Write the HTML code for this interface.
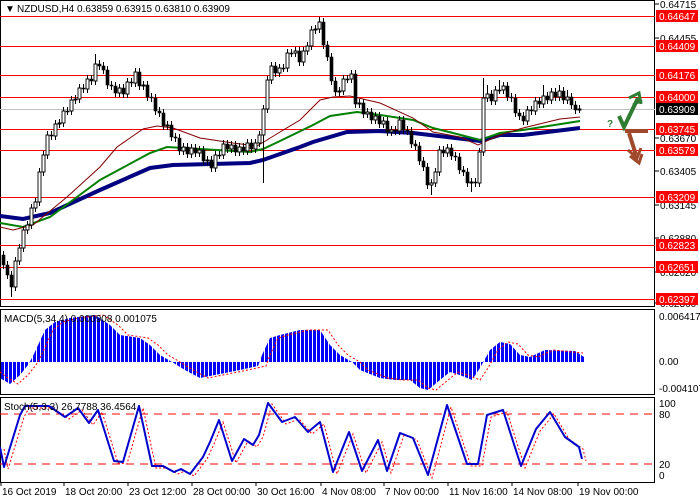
<!DOCTYPE html>
<html><head><meta charset="utf-8"><style>
body{margin:0;width:700px;height:500px;overflow:hidden;background:#fff}
svg{display:block}
text{font-family:"Liberation Sans",sans-serif;font-size:10px}
</style></head><body>
<svg width="700" height="500" xmlns="http://www.w3.org/2000/svg">
<defs>
<pattern id="bars" x="1" y="0" width="4" height="10" patternUnits="userSpaceOnUse"><rect x="0" y="0" width="3" height="10" fill="#0000ff"/></pattern>
</defs>
<rect x="0" y="0" width="700" height="500" fill="#fff"/>
<rect x="0.5" y="0.5" width="654" height="306" fill="none" stroke="#000"/>
<rect x="0.5" y="309.5" width="654" height="85" fill="none" stroke="#000"/>
<rect x="0.5" y="397.5" width="654" height="85" fill="none" stroke="#000"/>
<g stroke="#f00">
<line x1="0" x2="655" y1="16.5" y2="16.5"/><line x1="0" x2="655" y1="46.5" y2="46.5"/><line x1="0" x2="655" y1="75.5" y2="75.5"/><line x1="0" x2="655" y1="97.5" y2="97.5"/><line x1="0" x2="655" y1="129.5" y2="129.5"/><line x1="0" x2="655" y1="150.5" y2="150.5"/><line x1="0" x2="655" y1="197.5" y2="197.5"/><line x1="0" x2="655" y1="245.5" y2="245.5"/><line x1="0" x2="655" y1="267.5" y2="267.5"/><line x1="0" x2="655" y1="299.5" y2="299.5"/>
</g>
<line x1="0" x2="655" y1="109.5" y2="109.5" stroke="#c0c0c0"/>
<!-- MAs -->
<polyline fill="none" stroke="#000080" stroke-width="4" points="0,216 23,219 50,213 100,190 150,168 173,165 250,163 263,160 300,147 313,142 347,132 380,131 413,133 447,137 480,141 500,135 523,135 580,128"/>
<polyline fill="none" stroke="#008000" stroke-width="2" points="0,223 23,227 50,217 100,180 150,153 167,147 200,149 250,152 263,149 280,141 313,125 330,116 357,112 380,115 413,120 433,128 453,133 480,140 500,133 523,130 580,121"/>
<polyline fill="none" stroke="#800000" stroke-width="1" points="0,227 13,230 33,225 67,197 100,167 117,147 143,129 157,126 173,128 200,138 233,143 257,146 267,140 280,132 300,120 320,100 333,97 350,96 380,103 413,118 433,132 460,137 478,145 500,135 523,128 560,119 580,117"/>
<!-- wicks -->
<path stroke="#000" fill="none" d="M3.5 251V269M7.5 261V279M11.5 271V297M15.5 257V291M19.5 244V265M23.5 226V252M27.5 221V234M31.5 204V229M35.5 198V212M39.5 168V206M43.5 151V176M47.5 131V159M51.5 131V140M55.5 120V140M59.5 119V128M63.5 107V127M67.5 107V115M71.5 96V115M75.5 95V104M79.5 84V103M83.5 84V93M87.5 75V93M91.5 75V85M95.5 54V85M99.5 60V70M103.5 62V74M107.5 66V89M111.5 81V90M115.5 82V97M119.5 84V97M123.5 84V98M127.5 78V98M131.5 78V87M135.5 68V87M139.5 68V90M143.5 81V90M147.5 81V101M151.5 93V102M155.5 94V115M159.5 107V117M163.5 109V130M167.5 121V130M171.5 121V141M175.5 133V142M179.5 134V155M183.5 143V155M187.5 143V158M191.5 144V158M195.5 144V157M199.5 146V157M203.5 146V165M207.5 156V165M211.5 156V172M215.5 151V172M219.5 151V159M223.5 140V159M227.5 140V153M231.5 141V153M235.5 141V156M239.5 143V156M243.5 143V155M247.5 139V155M251.5 139V153M255.5 139V153M259.5 131V147M263.5 105V183M267.5 76V113M271.5 62V84M275.5 62V77M279.5 64V77M283.5 64V72M287.5 49V72M291.5 49V57M295.5 47V57M299.5 47V66M303.5 47V66M307.5 42V55M311.5 26V50M315.5 25V34M319.5 17V33M323.5 18V49M327.5 41V61M331.5 53V85M335.5 77V96M339.5 87V96M343.5 75V95M347.5 75V83M351.5 70V83M355.5 70V108M359.5 99V108M363.5 99V118M367.5 108V118M371.5 108V124M375.5 112V124M379.5 112V128M383.5 117V128M387.5 117V136M391.5 126V136M395.5 126V135M399.5 116V135M403.5 116V134M407.5 126V135M411.5 127V148M415.5 140V150M419.5 142V165M423.5 157V171M427.5 163V189M431.5 179V195M435.5 168V187M439.5 146V176M443.5 146V157M447.5 144V157M451.5 144V160M455.5 152V161M459.5 153V174M463.5 166V176M467.5 168V187M471.5 178V192M475.5 178V187M479.5 148V187M483.5 78V156M487.5 85V102M491.5 90V105M495.5 86V105M499.5 80V94M503.5 82V94M507.5 82V101M511.5 93V102M515.5 94V117M519.5 109V120M523.5 112V125M527.5 106V125M531.5 106V115M535.5 97V115M539.5 97V108M543.5 85V108M547.5 92V104M551.5 88V104M555.5 88V101M559.5 85V101M563.5 87V104M567.5 90V104M571.5 93V109M575.5 101V114M579.5 105V113"/>
<!-- black bodies -->
<path fill="#000" stroke="#000" stroke-width="0.6" d="M2 255h3v10h-3zM6 265h3v10h-3zM10 275h3v12h-3zM50 135h3v1h-3zM66 111h3v1h-3zM82 88h3v1h-3zM90 79h3v2h-3zM98 64h3v2h-3zM102 66h3v4h-3zM106 70h3v15h-3zM110 85h3v1h-3zM114 86h3v7h-3zM122 88h3v6h-3zM130 82h3v1h-3zM138 72h3v14h-3zM146 85h3v12h-3zM150 97h3v1h-3zM154 98h3v13h-3zM158 111h3v2h-3zM162 113h3v13h-3zM170 125h3v12h-3zM174 137h3v1h-3zM178 138h3v13h-3zM186 147h3v7h-3zM194 148h3v5h-3zM202 150h3v11h-3zM210 160h3v8h-3zM218 155h3v1h-3zM226 144h3v5h-3zM234 145h3v7h-3zM242 147h3v4h-3zM250 143h3v6h-3zM274 66h3v7h-3zM282 68h3v1h-3zM290 53h3v1h-3zM298 51h3v11h-3zM322 22h3v23h-3zM326 45h3v12h-3zM330 57h3v24h-3zM334 81h3v11h-3zM346 79h3v1h-3zM354 74h3v30h-3zM362 103h3v11h-3zM370 112h3v8h-3zM378 116h3v8h-3zM386 121h3v11h-3zM394 130h3v1h-3zM402 120h3v10h-3zM406 130h3v1h-3zM410 131h3v13h-3zM414 144h3v2h-3zM418 146h3v15h-3zM422 161h3v6h-3zM426 167h3v18h-3zM442 150h3v3h-3zM450 148h3v8h-3zM454 156h3v1h-3zM458 157h3v13h-3zM462 170h3v2h-3zM466 172h3v11h-3zM474 182h3v1h-3zM490 94h3v7h-3zM498 90h3v1h-3zM506 86h3v11h-3zM510 97h3v1h-3zM514 98h3v15h-3zM518 113h3v3h-3zM522 116h3v5h-3zM530 110h3v1h-3zM538 101h3v3h-3zM546 96h3v4h-3zM554 92h3v5h-3zM562 91h3v9h-3zM570 97h3v8h-3zM574 105h3v5h-3z"/>
<!-- white bodies -->
<path fill="#fff" stroke="#000" stroke-width="0.9" d="M14 261h3v26h-3zM18 248h3v13h-3zM22 230h3v18h-3zM26 225h3v5h-3zM30 208h3v17h-3zM34 202h3v6h-3zM38 172h3v30h-3zM42 155h3v17h-3zM46 135h3v20h-3zM54 124h3v12h-3zM58 123h3v1h-3zM62 111h3v12h-3zM70 100h3v11h-3zM74 99h3v1h-3zM78 88h3v11h-3zM86 79h3v10h-3zM94 64h3v17h-3zM118 88h3v5h-3zM126 82h3v12h-3zM134 72h3v11h-3zM142 85h3v1h-3zM166 125h3v1h-3zM182 147h3v4h-3zM190 148h3v6h-3zM198 150h3v3h-3zM206 160h3v1h-3zM214 155h3v13h-3zM222 144h3v11h-3zM230 145h3v4h-3zM238 147h3v5h-3zM246 143h3v8h-3zM254 143h3v6h-3zM258 135h3v8h-3zM262 109h3v26h-3zM266 80h3v29h-3zM270 66h3v14h-3zM278 68h3v5h-3zM286 53h3v15h-3zM294 51h3v2h-3zM302 51h3v11h-3zM306 46h3v5h-3zM310 30h3v16h-3zM314 29h3v1h-3zM318 22h3v7h-3zM338 91h3v1h-3zM342 79h3v12h-3zM350 74h3v5h-3zM358 103h3v1h-3zM366 112h3v2h-3zM374 116h3v4h-3zM382 121h3v3h-3zM390 130h3v2h-3zM398 120h3v11h-3zM430 183h3v2h-3zM434 172h3v11h-3zM438 150h3v22h-3zM446 148h3v5h-3zM470 182h3v1h-3zM478 152h3v31h-3zM482 98h3v54h-3zM486 94h3v4h-3zM494 90h3v11h-3zM502 86h3v4h-3zM526 110h3v11h-3zM534 101h3v10h-3zM542 96h3v8h-3zM550 92h3v8h-3zM558 91h3v6h-3zM566 97h3v3h-3zM578 109h3v1h-3z"/>
<!-- MACD -->
<polygon fill="url(#bars)" points="0,362 0,378 10,384 20,375 28,365 33,356 45,330 55,322 70,318 95,315 110,325 120,335 140,338 150,345 160,355 172,362 185,370 200,378 215,375 240,370 258,366 262,355 270,338 280,335 300,330 320,330 330,345 340,355 352,362 360,370 380,378 395,380 410,380 420,388 428,390 440,380 450,372 460,375 472,380 480,368 490,350 500,342 510,344 520,355 530,357 545,350 575,351 584,357 584,362"/>
<polyline fill="none" stroke="#f00" stroke-dasharray="2,2" points="0,372 8,378 18,384 28,375 36,365 41,356 53,330 63,322 78,318 103,315 118,325 128,335 148,338 158,345 168,355 180,362 193,370 208,378 223,375 248,370 266,366 270,355 278,338 288,335 308,330 328,330 338,345 348,355 360,362 368,370 388,378 403,380 418,380 428,388 436,390 448,380 458,372 468,375 480,380 488,368 498,350 508,342 518,344 528,355 538,357 553,350 583,353"/>
<!-- Stoch -->
<line x1="0" x2="655" y1="414" y2="414" stroke="#f00" stroke-dasharray="8,6"/>
<line x1="0" x2="655" y1="464" y2="464" stroke="#f00" stroke-dasharray="8,6"/>
<polyline fill="none" stroke="#f00" stroke-dasharray="2,2" points="4,449 8,469 24,417 29,408 53,408 69,419 82,410 93,425 102,412 118,463 127,464 143,408 156,468 167,468 178,474 185,471 194,476 207,459 214,444 223,422 236,463 248,441 257,447 263,437 272,404 286,424 299,419 312,434 324,424 337,474 353,434 366,473 382,442 391,473 404,435 417,440 432,478 451,407 471,466 482,466 491,417 507,412 525,468 540,431 554,414 569,439 583,449 586,461"/>
<polyline fill="none" stroke="#0000cd" stroke-width="2" stroke-linejoin="round" points="0,447 4,467 20,415 25,406 49,406 65,417 78,408 89,423 98,410 114,461 123,462 139,406 152,466 163,466 174,472 181,469 190,474 203,457 210,442 219,420 232,461 244,439 253,445 259,435 268,403 282,422 295,417 308,432 320,422 333,472 349,432 362,471 378,440 387,471 400,433 413,438 428,475 447,405 467,464 478,464 487,415 503,410 521,466 536,429 550,412 565,437 579,447 582,459"/>
<!-- texts -->
<text x="5" y="12" font-size="9">▼</text>
<text x="17" y="12" font-size="11">NZDUSD,H4  0.63859 0.63915 0.63810 0.63909</text>
<text x="4" y="322">MACD(5,34,4) 0.000908 0.001075</text>
<text x="4" y="410">Stoch(5,3,3) 26.7788 36.4564</text>
<g stroke="#000"><line x1="655" x2="659" y1="4" y2="4"/><line x1="655" x2="659" y1="38" y2="38"/><line x1="655" x2="659" y1="138" y2="138"/><line x1="655" x2="659" y1="171" y2="171"/><line x1="655" x2="659" y1="205" y2="205"/><line x1="655" x2="659" y1="238" y2="238"/><line x1="655" x2="659" y1="272" y2="272"/><line x1="655" x2="659" y1="303" y2="303"/></g>
<text x="660" y="8">0.64715</text><text x="660" y="42">0.64455</text><text x="660" y="142">0.63670</text><text x="660" y="175">0.63405</text><text x="660" y="209">0.63145</text><text x="660" y="242">0.62880</text><text x="660" y="276">0.62620</text><text x="660" y="307">0.62360</text>
<g fill="#f00"><rect x="656" y="10" width="42" height="12"/><rect x="656" y="40" width="42" height="12"/><rect x="656" y="69" width="42" height="12"/><rect x="656" y="91" width="42" height="12"/><rect x="656" y="123" width="42" height="12"/><rect x="656" y="144" width="42" height="12"/><rect x="656" y="191" width="42" height="12"/><rect x="656" y="239" width="42" height="12"/><rect x="656" y="261" width="42" height="12"/><rect x="656" y="293" width="42" height="12"/></g>
<rect x="656" y="103" width="42" height="12" fill="#000"/>
<g fill="#fff"><text x="659" y="20">0.64647</text><text x="659" y="50">0.64409</text><text x="659" y="79">0.64176</text><text x="659" y="101">0.64000</text><text x="659" y="113">0.63909</text><text x="659" y="133">0.63745</text><text x="659" y="154">0.63579</text><text x="659" y="201">0.63209</text><text x="659" y="249">0.62823</text><text x="659" y="271">0.62651</text><text x="659" y="303">0.62397</text></g>
<text x="659" y="320">0.006417</text><text x="659" y="365">0.00</text><text x="659" y="392">-0.004107</text>
<text x="659" y="407">100</text><text x="659" y="418">80</text><text x="659" y="468">20</text><text x="659" y="479">0</text>
<g stroke="#000"><line x1="1" x2="1" y1="482" y2="486"/><line x1="64" x2="64" y1="482" y2="486"/><line x1="128" x2="128" y1="482" y2="486"/><line x1="192" x2="192" y1="482" y2="486"/><line x1="256" x2="256" y1="482" y2="486"/><line x1="321" x2="321" y1="482" y2="486"/><line x1="384" x2="384" y1="482" y2="486"/><line x1="448" x2="448" y1="482" y2="486"/><line x1="512" x2="512" y1="482" y2="486"/><line x1="578" x2="578" y1="482" y2="486"/></g>
<text x="2" y="495">16 Oct 2019</text><text x="65" y="495">18 Oct 20:00</text><text x="129" y="495">23 Oct 12:00</text><text x="193" y="495">28 Oct 00:00</text><text x="257" y="495">30 Oct 16:00</text><text x="322" y="495">4 Nov 08:00</text><text x="385" y="495">7 Nov 00:00</text><text x="449" y="495">11 Nov 16:00</text><text x="513" y="495">14 Nov 08:00</text><text x="579" y="495">19 Nov 00:00</text>
<!-- arrows -->
<text x="607" y="127" fill="#2e7d32" font-size="15" font-weight="bold">?</text>
<path d="M619 116 L624 127 L638 98" fill="none" stroke="#2e7d32" stroke-width="4"/>
<path d="M629 98 L639 93 L641 104 M633 105 L642 100" fill="none" stroke="#2e7d32" stroke-width="3"/>
<path d="M625 131 L648 131 M629 133 L636 155" fill="none" stroke="#a0482a" stroke-width="4"/>
<path d="M628 150 L637 158 L641 148 M630 156 L639 163 L642 154" fill="none" stroke="#a0482a" stroke-width="3"/>
</svg>
</body></html>
